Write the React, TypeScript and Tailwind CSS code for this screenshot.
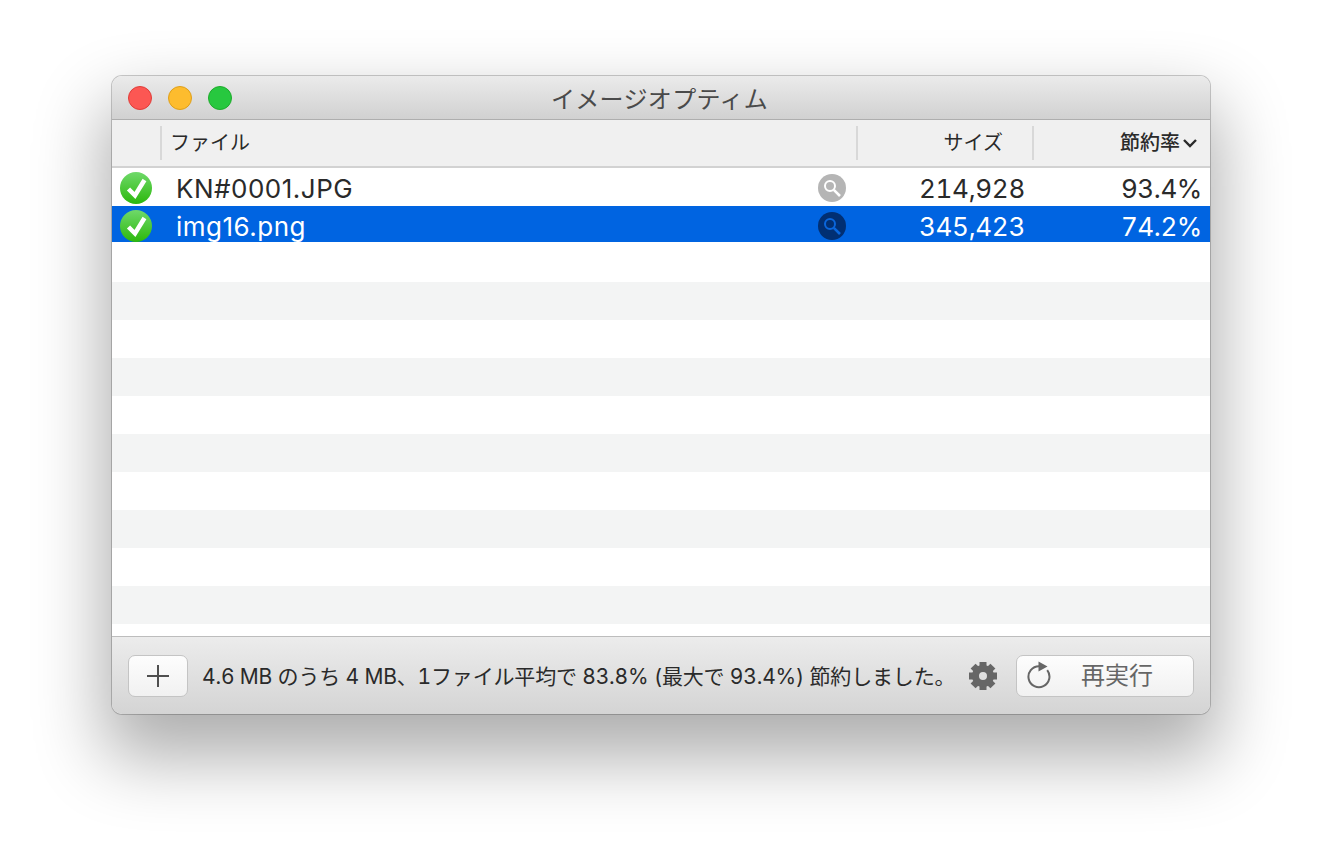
import React from 'react';

const font = 'font-["Inter","Noto_Sans_CJK_JP",sans-serif]';

function CheckBadge() {
  return (
    <svg width="34" height="34" viewBox="0 0 34 34" className="shrink-0">
      <defs>
        <linearGradient id="okGreen" x1="0" y1="0" x2="0" y2="1">
          <stop offset="0" stopColor="#6fd96a" />
          <stop offset="1" stopColor="#2cb80c" />
        </linearGradient>
      </defs>
      <circle cx="17" cy="17" r="16" fill="url(#okGreen)" />
      <path d="M9.5 18 L16 24.5 L25.5 9" fill="none" stroke="#fff" strokeWidth="4.5" />
    </svg>
  );
}

function Lens({ bg, fg }: { bg: string; fg: string }) {
  return (
    <svg width="28" height="28" viewBox="0 0 28 28" className="shrink-0">
      <circle cx="14" cy="14" r="14" fill={bg} />
      <circle cx="12" cy="12" r="5" fill="none" stroke={fg} strokeWidth="2" />
      <path d="M15.8 15.8 L22 22" stroke={fg} strokeWidth="2.6" />
    </svg>
  );
}

function Gear() {
  const teeth = [0, 45, 90, 135, 180, 225, 270, 315];
  return (
    <svg width="30" height="30" viewBox="0 0 30 30">
      {teeth.map((a) => (
        <rect key={a} x="11.5" y="1" width="7" height="7" fill="#666" transform={`rotate(${a} 15 15)`} />
      ))}
      <circle cx="15" cy="15" r="7.5" fill="none" stroke="#666" strokeWidth="7" />
    </svg>
  );
}

function Reload() {
  return (
    <svg width="26" height="32" viewBox="0 0 26 32">
      <path d="M12 6.2 A10.5 10.5 0 1 0 20.2 10.2" fill="none" stroke="#666" strokeWidth="2" />
      <path d="M11.5 1.5 L20.5 6.5 L11.5 11.5 Z" fill="#666" />
    </svg>
  );
}

function Row({ name, size, pct, selected }: { name: string; size: string; pct: string; selected?: boolean }) {
  return (
    <div
      className={`flex items-center h-[38px] pt-[2px] text-[26px] ${
        selected ? 'bg-[linear-gradient(#0064e1_36px,transparent_36px)] text-white' : 'text-[#2a2a2a]'
      }`}
    >
      <div className="w-[48px] pl-[7px] flex"><CheckBadge /></div>
      <div className="flex-1 pl-[16px] tracking-[0.5px]">{name}</div>
      <div className="w-[40px]">
        {selected ? <Lens bg="#012f73" fg="#0a66dc" /> : <Lens bg="#b5b5b5" fg="#ffffff" />}
      </div>
      <div className="w-[175px] text-right pr-[8px] tabular-nums tracking-[-0.3px]">{size}</div>
      <div className="w-[177px] text-right pr-[8px] tabular-nums tracking-[-0.4px]">{pct}</div>
    </div>
  );
}

export default function App() {
  const stripes = [false, true, false, true, false, true, false, true, false, true];
  return (
    <div className={`h-[862px] bg-white pt-[76px] pl-[112px] ${font}`}>
      <div className="w-[1098px] h-[638px] rounded-[10px] overflow-hidden flex flex-col shadow-[0_0_0_1px_rgba(0,0,0,0.2),0_36px_70px_8px_rgba(0,0,0,0.32)]">
        <div className="h-[44px] flex items-center bg-gradient-to-b from-[#ebebeb] to-[#d1d1d1] border-b-[1px] border-[#aeaeae] relative">
          <div className="flex gap-[16px] pl-[16px]">
            <div className="w-[24px] h-[24px] rounded-full bg-[#fc5753] border border-[#df3d39]" />
            <div className="w-[24px] h-[24px] rounded-full bg-[#fdbc2e] border border-[#de9f1a]" />
            <div className="w-[24px] h-[24px] rounded-full bg-[#27c83f] border border-[#1eab2c]" />
          </div>
          <div className="absolute left-0 w-[1095px] top-[6px] text-center text-[24px] tracking-[0.35px] text-[#4a4a4a]">イメージオプティム</div>
        </div>
        <div className="h-[48px] flex items-center bg-[#f0f0f0] border-b-[2px] border-[#d2d2d2] text-[#2a2a2a] text-[20px]">
          <div className="w-[50px] h-[34px] border-r-2 border-[#d8d8d8]" />
          <div className="w-[696px] h-[34px] pl-[8px] leading-[34px] border-r-2 border-[#d8d8d8]">ファイル</div>
          <div className="w-[176px] h-[34px] pr-[29px] text-right leading-[34px] border-r-2 border-[#d8d8d8]">サイズ</div>
          <div className="flex-1 flex justify-end items-center pr-[12px] font-medium text-[20px]">
            節約率
            <svg width="16" height="10" viewBox="0 0 16 10" className="ml-[2px]"><path d="M2 2 L8 8 L14 2" fill="none" stroke="#2a2a2a" strokeWidth="2.4" /></svg>
          </div>
        </div>
        <div className="h-[468px] bg-white overflow-hidden">
          <Row name="KN#0001.JPG" size="214,928" pct="93.4%" />
          <Row name="img16.png" size="345,423" pct="74.2%" selected />
          {stripes.map((s, i) => (
            <div key={i} className={`h-[38px] ${s ? 'bg-[#f3f4f4]' : 'bg-white'}`} />
          ))}
        </div>
        <div className="flex-1 flex items-center px-[16px] bg-gradient-to-b from-[#ececec] to-[#d4d4d4] border-t border-[#bdbdbd]">
          <div className="w-[60px] h-[42px] rounded-[7px] bg-gradient-to-b from-[#fdfdfd] to-[#f1f1f1] border border-[#c4c4c4] flex items-center justify-center">
            <svg width="24" height="24" viewBox="0 0 24 24"><path d="M12 1 V23 M1 12 H23" stroke="#4f4f4f" strokeWidth="2" /></svg>
          </div>
          <div className="ml-[14px] pt-[2px] text-[21px] tabular-nums tracking-[-0.18px] text-[#2a2a2a] flex-1 whitespace-nowrap">4.6 MB のうち 4 MB、1ファイル平均で 83.8% (最大で 93.4%) 節約しました。</div>
          <Gear />
          <div className="ml-[18px] w-[178px] h-[42px] rounded-[7px] bg-gradient-to-b from-[#fdfdfd] to-[#f1f1f1] border border-[#c4c4c4] flex items-center pl-[10px] text-[24px] text-[#666]">
            <Reload />
            <span className="ml-[28px]">再実行</span>
          </div>
        </div>
      </div>
    </div>
  );
}
